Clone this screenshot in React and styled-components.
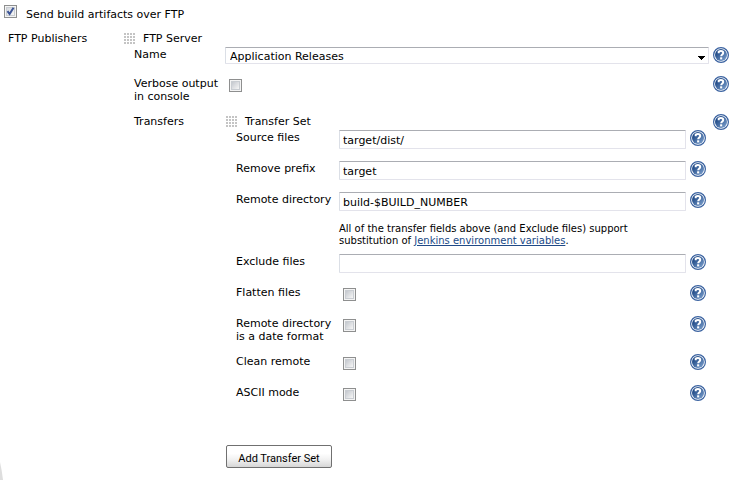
import React, { useId } from "react";
import styled, { createGlobalStyle } from "styled-components";

const Global = createGlobalStyle`
  * { box-sizing: border-box; }
  body {
    margin: 0;
    background: #fff;
    color: #000;
    font: 11px/13px Verdana, "DejaVu Sans", sans-serif;
  }
  #root { overflow: hidden; }
`;

const Page = styled.main`
  display: flex;
  flex-direction: column;
  min-height: 100vh;
  padding: 0 6px 0 4px;
`;

const Header = styled.label`
  display: flex;
  gap: 9px;
  height: 31px;
  padding-top: 5px;
  span { padding-top: 3px; }
`;

const Publishers = styled.section`
  display: grid;
  grid-template-columns: 116px minmax(0, 1fr);
  flex: 1;
  padding-left: 4px;
`;

const Title = styled.h2`
  margin: 0;
  padding-top: 1px;
  font: inherit;
`;

const GroupTitle = styled.h3`
  display: flex;
  align-items: flex-start;
  gap: 7px;
  height: 16px;
  margin: 0;
  padding-top: 1px;
  font: inherit;
`;

const Fields = styled.div`
  padding-left: 10px;
`;

const Row = styled.div`
  display: grid;
  grid-template-columns: ${(p) => (p.$inner ? 103 : 91)}px minmax(0, 1fr) 16px;
  min-height: ${(p) => p.$height}px;
  align-items: start;
`;

const Label = styled.label`
  padding-top: 1px;
  white-space: pre-line;
`;

const Control = styled.div`
  display: flex;
  padding-right: 4px;
`;

const TransferSets = styled.div`
  padding: 0 7px 0 1px;
`;

const TextInput = styled.input`
  flex: 1;
  min-width: 0;
  height: 19px;
  padding: 2px 3px 0;
  border: 1px solid #e3e3eb;
  border-top-color: #abadb3;
  border-left-color: #dbdfe6;
  border-radius: 1px;
  outline: 0;
  background: #fff;
  color: #000;
  font: inherit;
`;

const SelectBox = styled.div`
  position: relative;
  flex: 1;
  display: flex;
  svg {
    position: absolute;
    right: 4px;
    top: 9px;
    pointer-events: none;
  }
`;

const Select = styled.select`
  flex: 1;
  height: 17px;
  padding: 1px 16px 0 4px;
  appearance: none;
  border: 1px solid #e3e3eb;
  border-top-color: #abadb3;
  border-left-color: #dbdfe6;
  border-radius: 1px;
  background: #fff;
  color: #000;
  font: inherit;
`;

const Tick = styled.input`
  appearance: none;
  flex: none;
  width: 13px;
  height: 13px;
  margin: ${(p) => (p.$heading ? "0" : "3px 4px")};
  border: 1px solid #8e8f8f;
  background: linear-gradient(135deg, #c4c8ce, #f6f6f6) center / 7px 7px no-repeat,
    linear-gradient(#c9cdd2, #c9cdd2) center / 9px 9px no-repeat, #f4f4f4;
  &:checked {
    background: url("data:image/svg+xml,%3Csvg xmlns='http://www.w3.org/2000/svg' viewBox='0 0 11 11'%3E%3Cpath d='M2.5 5.2 4.6 8 8.5 1.8' fill='none' stroke='%233c5496' stroke-width='2'/%3E%3C/svg%3E") center / 11px 11px no-repeat,
      linear-gradient(135deg, #d4d8de, #f6f6f6) center / 7px 7px no-repeat,
      linear-gradient(#c9cdd2, #c9cdd2) center / 9px 9px no-repeat, #f4f4f4;
  }
`;

const HelpLink = styled.button`
  display: block;
  width: 16px;
  height: 16px;
  padding: 0;
  border: 0;
  background: none;
  svg { display: block; }
`;

const Note = styled.p`
  grid-column: 2;
  max-width: 300px;
  margin: 0;
  font-size: 10px;
  line-height: 12px;
  a { color: #204a87; }
`;

const AddButton = styled.button`
  display: block;
  width: 106px;
  height: 23px;
  margin-top: 29px;
  padding: 3px 0 0;
  border: 1px solid #707070;
  border-radius: 2px;
  background: linear-gradient(#fff 35%, #f1f1f1 65%, #d6d6d6);
  color: #000;
  font: 11px/13px Roboto, "Liberation Sans", sans-serif;
`;

const Swoosh = styled.svg`
  position: absolute;
  left: 0;
  bottom: 0;
`;

function Handle() {
  const steps = [0, 3, 6, 9];
  return (
    <svg width="12" height="12" aria-hidden="true">
      {steps.flatMap((y) =>
        steps.map((x) => <rect key={`${x}-${y}`} x={x} y={y + 1} width="2" height="2" fill="#c4c4c4" />)
      )}
    </svg>
  );
}

function Help({ topic }) {
  const id = useId();
  return (
    <HelpLink type="button" aria-label={`Help for ${topic}`}>
      <svg width="16" height="16" viewBox="0 0 16 16">
        <defs>
          <linearGradient id={id} x1="0" y1="0" x2="1" y2="1">
            <stop offset="0.2" stopColor="#204a87" />
            <stop offset="1" stopColor="#83a6d2" />
          </linearGradient>
        </defs>
        <circle cx="8" cy="8" r="7.4" fill="#fff" stroke="#3a62a0" strokeWidth="1.2" />
        <circle cx="8" cy="8" r="6" fill={`url(#${id})`} />
        <path d="M5.7 6.2V4.7Q6.6 4.1 7.9 4.1c1.6 0 2.3.7 2.3 1.8 0 1.5-2 1.6-2 3.4" fill="none" stroke="#fff" strokeWidth="2" />
        <path d="M7.1 10.3h2.1v2.1H7.1z" fill="#fff" />
      </svg>
    </HelpLink>
  );
}

function Field({ label, height, inner, type, value }) {
  const id = useId();
  return (
    <Row $height={height} $inner={inner}>
      <Label htmlFor={id}>{label}</Label>
      <Control>
        {type === "checkbox" && <Tick id={id} type="checkbox" />}
        {type === "text" && <TextInput id={id} type="text" defaultValue={value} />}
        {type === "select" && (
          <SelectBox>
            <Select id={id}>
              <option>{value}</option>
            </Select>
            <svg width="7" height="4" shapeRendering="crispEdges" aria-hidden="true">
              <path d="M0 0h7v1H6v1H5v1H4v1H3V3H2V2H1V1H0z" />
            </svg>
          </SelectBox>
        )}
      </Control>
      <Help topic={label} />
    </Row>
  );
}

const transferSettings = [
  { label: "Flatten files", height: 31 },
  { label: "Remote directory\nis a date format", height: 38 },
  { label: "Clean remote", height: 31 },
  { label: "ASCII mode", height: 31 },
];

export default function App() {
  return (
    <>
      <Global />
      <Page>
        <Header>
          <Tick type="checkbox" defaultChecked $heading />
          <span>Send build artifacts over FTP</span>
        </Header>
        <Publishers>
          <Title>FTP Publishers</Title>
          <div>
            <GroupTitle><Handle />FTP Server</GroupTitle>
            <Fields>
              <Field label="Name" type="select" value="Application Releases" height={29} />
              <Field label={"Verbose output\nin console"} type="checkbox" height={38} />
              <Row>
                <Label as="div">Transfers</Label>
                <TransferSets>
                  <GroupTitle><Handle />Transfer Set</GroupTitle>
                  <Fields>
                    <Field inner label="Source files" type="text" value="target/dist/" height={31} />
                    <Field inner label="Remove prefix" type="text" value="target" height={31} />
                    <Field inner label="Remote directory" type="text" value="build-$BUILD_NUMBER" height={31} />
                    <Row $inner $height={31}>
                      <Note>
                        All of the transfer fields above (and Exclude files) support
                        substitution of <a href="#variables">Jenkins environment variables</a>.
                      </Note>
                    </Row>
                    <Field inner label="Exclude files" type="text" value="" height={31} />
                    {transferSettings.map((s) => (
                      <Field key={s.label} inner type="checkbox" {...s} />
                    ))}
                  </Fields>
                  <AddButton type="button">Add Transfer Set</AddButton>
                </TransferSets>
                <Help topic="Transfers" />
              </Row>
            </Fields>
          </div>
        </Publishers>
      </Page>
      <Swoosh width="3" height="18" aria-hidden="true">
        <path d="M0 0Q2 9 3 18H0z" fill="#dedede" />
      </Swoosh>
    </>
  );
}
